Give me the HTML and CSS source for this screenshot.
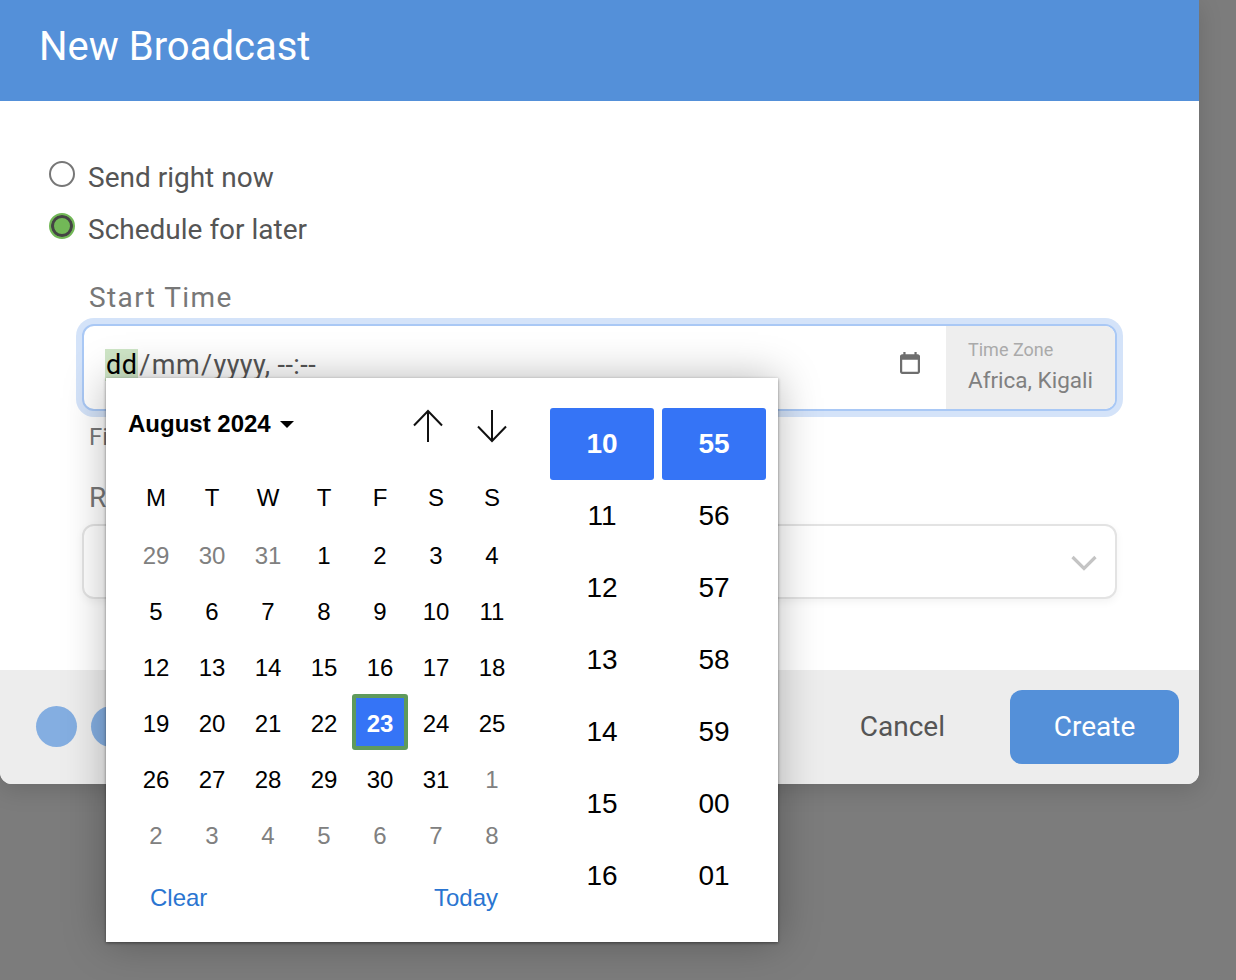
FILE: index.html
```html
<!DOCTYPE html>
<html lang="en">
<head>
<meta charset="utf-8">
<title>New Broadcast</title>
<link rel="stylesheet" href="styles.css">
</head>
<body>
<div class="modal">
  <header class="modal-head"><h1>New Broadcast</h1></header>
  <main class="modal-body">
    <label class="radio-row"><span class="radio"></span><span>Send right now</span></label>
    <label class="radio-row"><span class="radio checked"></span><span>Schedule for later</span></label>
    <div class="field">
      <div class="field-label">Start Time</div>
      <div class="dt-input">
        <div class="dt-value"><span class="seg">dd</span><span class="slash">/</span>mm<span class="slash">/</span>yyyy, --:--</div>
        <svg class="cal-icon" viewBox="3 2 18 20" width="20" height="22" preserveAspectRatio="none"><path d="M19 4h-1V2h-2v2H8V2H6v2H5c-1.100 0-2 .9-2 2v14c0 1.100.9 2 2 2h14c1.100 0 2-.9 2-2V6c0-1.100-.9-2-2-2zm0 16H5V9h14v11z" fill="#6e6e6e"/></svg>
        <div class="tz"><div class="tz-label">Time Zone</div><div class="tz-value">Africa, Kigali</div></div>
      </div>
      <div class="hint">Fi</div>
    </div>
    <div class="field second">
      <div class="field-label">R</div>
      <div class="select">
        <svg viewBox="0 0 26 16" width="26" height="16"><path d="M1.500 2l11.500 11.500L24.500 2" fill="none" stroke="#c4c4c4" stroke-width="3.200"/></svg>
      </div>
    </div>
  </main>
  <footer class="modal-foot">
    <div class="dots"><span class="dot"></span><span class="dot"></span></div>
    <div class="actions"><button class="btn-cancel">Cancel</button><button class="btn-create">Create</button></div>
  </footer>
</div>

<div class="picker">
  <div class="cal">
    <div class="cal-head">
      <div class="month">August 2024<span class="caret"></span></div>
      <div class="arrows">
        <svg viewBox="0 0 32 34" width="32" height="34"><path d="M16 33V2M2 16.500L16 2l14 14.500" fill="none" stroke="#111" stroke-width="2"/></svg>
        <svg viewBox="0 0 32 34" width="32" height="34"><path d="M16 1v31M2 17.500L16 32l14-14.500" fill="none" stroke="#111" stroke-width="2"/></svg>
      </div>
    </div>
    <div class="grid">
      <span class="dow">M</span><span class="dow">T</span><span class="dow">W</span><span class="dow">T</span><span class="dow">F</span><span class="dow">S</span><span class="dow">S</span>
      <span class="day off">29</span><span class="day off">30</span><span class="day off">31</span><span class="day">1</span><span class="day">2</span><span class="day">3</span><span class="day">4</span>
      <span class="day">5</span><span class="day">6</span><span class="day">7</span><span class="day">8</span><span class="day">9</span><span class="day">10</span><span class="day">11</span>
      <span class="day">12</span><span class="day">13</span><span class="day">14</span><span class="day">15</span><span class="day">16</span><span class="day">17</span><span class="day">18</span>
      <span class="day">19</span><span class="day">20</span><span class="day">21</span><span class="day">22</span><span class="day today">23</span><span class="day">24</span><span class="day">25</span>
      <span class="day">26</span><span class="day">27</span><span class="day">28</span><span class="day">29</span><span class="day">30</span><span class="day">31</span><span class="day off">1</span>
      <span class="day off">2</span><span class="day off">3</span><span class="day off">4</span><span class="day off">5</span><span class="day off">6</span><span class="day off">7</span><span class="day off">8</span>
    </div>
    <div class="cal-foot"><a>Clear</a><a>Today</a></div>
  </div>
  <div class="time">
    <div class="col"><span class="t sel">10</span><span class="t">11</span><span class="t">12</span><span class="t">13</span><span class="t">14</span><span class="t">15</span><span class="t">16</span></div>
    <div class="col"><span class="t sel">55</span><span class="t">56</span><span class="t">57</span><span class="t">58</span><span class="t">59</span><span class="t">00</span><span class="t">01</span></div>
  </div>
</div>
</body>
</html>
```
FILE: styles.css
```css
* { box-sizing: border-box; }
html, body { margin: 0; height: 100%; }
body {
  width: 1236px;
  height: 980px;
  background: #7c7c7c;
  font-family: Roboto, sans-serif;
  position: relative;
  overflow: hidden;
}
.modal {
  width: 1199px;
  height: 784px;
  background: #fff;
  border-radius: 0 0 12px 12px;
  box-shadow: 0 6px 24px rgba(0,0,0,.14);
  display: flex;
  flex-direction: column;
  overflow: hidden;
}
.modal-head {
  height: 101px;
  background: #5490d9;
  display: flex;
  align-items: center;
  padding: 0 39px 8px;
}
.modal-head h1 {
  margin: 0;
  font-size: 40px;
  font-weight: 400;
  color: #fff;
}
.modal-body {
  flex: 1;
  padding: 50px 82px 0 49px;
}
.radio-row {
  display: flex;
  align-items: center;
  gap: 13px;
  height: 52px;
  font-size: 28px;
  color: #555;
}
.radio {
  width: 26px;
  height: 26px;
  margin-top: -6px;
  border-radius: 50%;
  border: 2px solid #777;
  background: #fff;
  flex: none;
}
.radio.checked {
  background: #72b857;
  border: 2px solid #72b857;
  box-shadow: inset 0 0 0 3px #444;
}
.field { margin: 25px 0 0 33px; }
.field-label {
  font-size: 28px;
  line-height: 36px;
  letter-spacing: 1.4px;
  color: #777;
  padding-left: 7px;
}
.dt-input {
  margin-top: 8px;
  height: 87px;
  display: flex;
  align-items: center;
  background: #fff;
  border: 2px solid #a9c8f5;
  border-radius: 12px;
  box-shadow: 0 0 0 6px #d4e3f9;
  overflow: hidden;
}
.dt-value {
  flex: 1;
  padding: 0 0 6px 21px;
  font-size: 27px;
  color: #555;
  letter-spacing: .4px;
}
.seg { background: #cfe6c7; color: #000; padding: 0 1px; }
.slash { padding: 0 1px; }
.cal-icon { flex: none; margin: 0 26px 10px 0; }
.tz {
  width: 169px;
  height: 100%;
  background: #eee;
  padding: 13px 22px 0;
  flex: none;
  white-space: nowrap;
}
.tz-label { font-size: 18px; line-height: 22px; color: #aaa; }
.tz-value { font-size: 22.5px; line-height: 34px; margin-top: 2px; color: #808080; }
.hint { font-size: 24px; line-height: 28px; color: #777; margin: 12px 0 0 7px; }
.second { margin-top: 0; }
.second .field-label { margin-top: 29px; }
.select {
  margin-top: 8px;
  height: 75px;
  background: #fff;
  border: 2px solid #e3e3e3;
  border-radius: 12px;
  box-shadow: 0 3px 8px rgba(0,0,0,.05);
  display: flex;
  align-items: center;
  justify-content: flex-end;
  padding: 2px 18px 0 0;
}
.modal-foot {
  height: 114px;
  background: #ededed;
  display: flex;
  align-items: flex-start;
  justify-content: space-between;
  padding: 20px 20px 0 36px;
}
.dots { display: flex; gap: 14px; margin-top: 16px; }
.dot { width: 41px; height: 41px; border-radius: 50%; background: #84aee1; }
.actions { display: flex; align-items: center; }
.btn-cancel {
  border: 0;
  background: none;
  font: 400 28px Roboto, sans-serif;
  color: #555;
  margin: 0 65px 2px 0;
  padding: 0;
}
.btn-create {
  width: 169px;
  height: 74px;
  border: 0;
  border-radius: 12px;
  background: #5490d9;
  color: #fff;
  font: 400 28px Roboto, sans-serif;
  padding: 0 0 2px;
}
.picker {
  position: absolute;
  left: 106px;
  top: 378px;
  width: 672px;
  height: 564px;
  background: #fff;
  box-shadow: 0 0 40px rgba(0,0,0,.28), 0 1px 3px rgba(0,0,0,.45);
  display: flex;
  font-family: "Liberation Sans", Arial, sans-serif;
  color: #000;
}
.cal { width: 444px; padding: 0 0 0 22px; flex: none; }
.cal-head {
  height: 92px;
  display: flex;
  align-items: flex-start;
  justify-content: space-between;
  padding: 32px 42px 0 0;
}
.month { font-size: 24px; font-weight: 700; line-height: 28px; display: flex; align-items: center; }
.caret {
  margin-left: 9px;
  width: 0;
  height: 0;
  border-left: 7px solid transparent;
  border-right: 7px solid transparent;
  border-top: 7px solid #000;
}
.arrows { display: flex; gap: 32px; margin-top: -1px; }
.grid {
  display: grid;
  grid-template-columns: repeat(7, 56px);
  grid-auto-rows: 56px;
}
.dow, .day {
  display: flex;
  align-items: center;
  justify-content: center;
  font-size: 24px;
}
.dow { margin-top: -1px; }
.day { padding-top: 4px; }
.off { color: #808080; }
.today {
  background: #3574f6;
  color: #fff;
  font-weight: 700;
  border: 4px solid #5f9a5c;
  border-radius: 3px;
}
.cal-foot {
  display: flex;
  justify-content: space-between;
  padding: 21px 0 0 22px;
  width: 370px;
  font-size: 24px;
  line-height: 30px;
  color: #2a75d1;
}
.time { display: flex; gap: 8px; padding-top: 30px; }
.col { width: 104px; display: flex; flex-direction: column; }
.t {
  height: 72px;
  display: flex;
  align-items: center;
  justify-content: center;
  font-size: 28px;
}
.t.sel {
  background: #3574f6;
  color: #fff;
  font-weight: 700;
  border-radius: 3px;
}
```
